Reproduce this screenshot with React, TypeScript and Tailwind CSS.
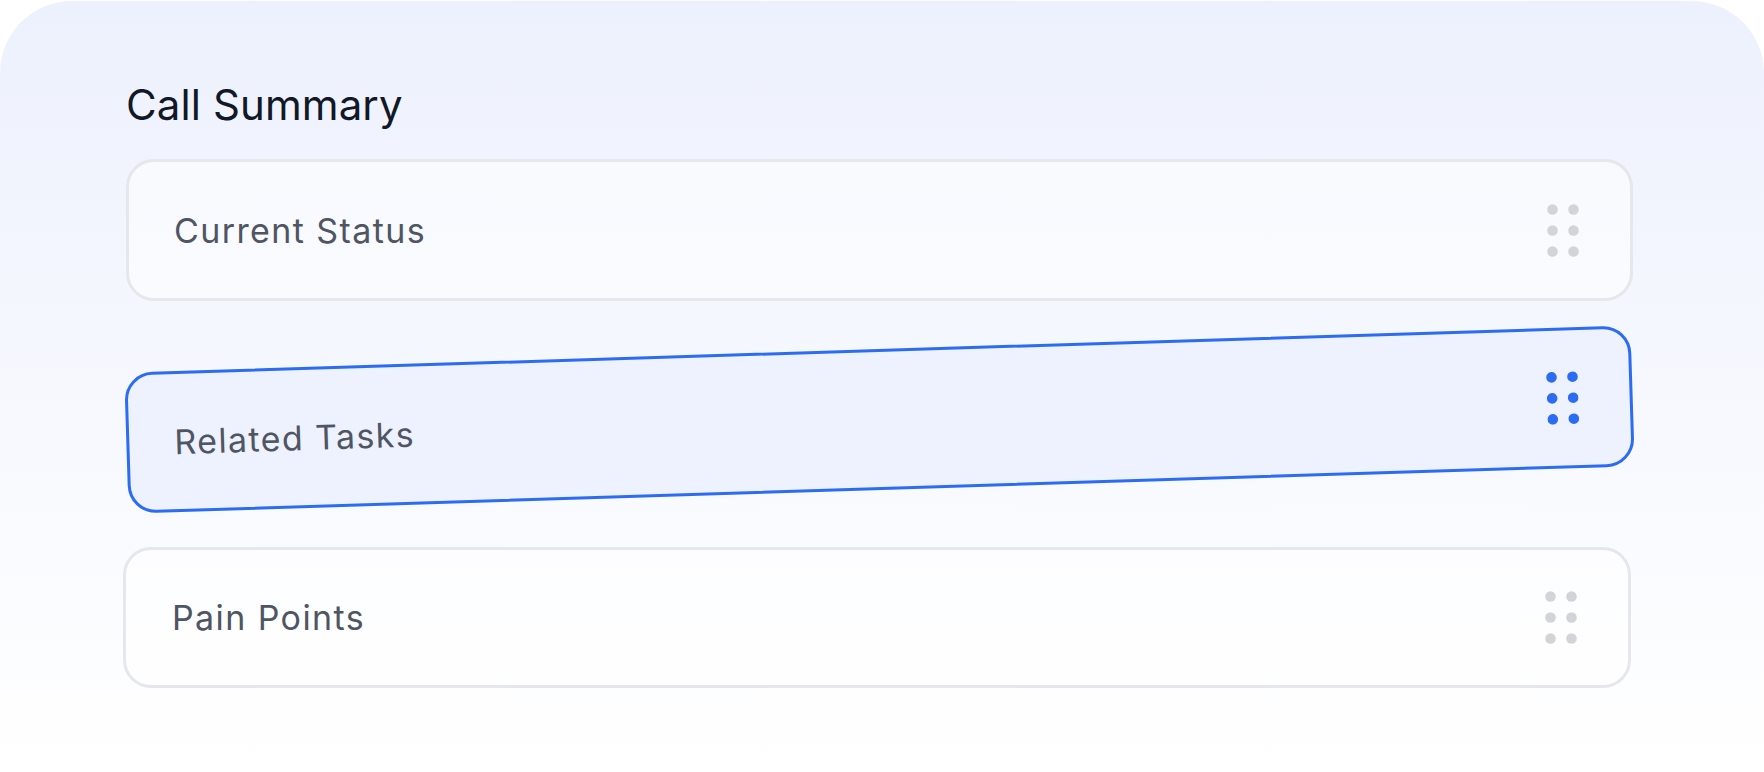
import React from 'react'

const items = ['Current Status', 'Related Tasks', 'Pain Points']

function Grip({ active }: { active?: boolean }) {
  const fill = active ? '#2b6cf3' : '#d4d4d8'
  const dots = [
    [5.5, 5.5],
    [26.5, 5.5],
    [5.5, 26.5],
    [26.5, 26.5],
    [5.5, 47.5],
    [26.5, 47.5],
  ]
  return (
    <svg width="32" height="53" viewBox="0 0 32 53" className="shrink-0">
      {dots.map(([cx, cy], i) => (
        <circle key={i} cx={cx} cy={cy} r="5.3" fill={fill} />
      ))}
    </svg>
  )
}

export default function App() {
  return (
    <div className="min-h-screen bg-white font-['Inter','Noto_Sans',sans-serif]">
      <div className="mt-px h-[771px] rounded-t-[72px] bg-gradient-to-b from-[#edf1fd] to-white pl-[126px] pr-[131px] pt-[83px]">
        <h2 className="text-[42px] leading-none font-normal text-[#111827] tracking-[0.1px]">
          Call Summary
        </h2>

        <div className="mt-[33px] flex h-[142px] items-center justify-between rounded-[28px] border-[3px] border-[#e6e7eb] bg-white/50 pl-[45px] pr-[51px]">
          <span className="text-[34px] tracking-[1.4px] text-[#4f5562]">{items[0]}</span>
          <Grip />
        </div>

        <div className="mt-[48px] flex h-[141px] -rotate-[1.8deg] items-center justify-between rounded-[28px] border-[3px] border-[#2b6cf3] bg-[#edf2fe] pl-[45px] pr-[51px]">
          <span className="text-[34px] tracking-[1.4px] text-[#4f5562]">{items[1]}</span>
          <Grip active />
        </div>

        <div className="mt-[57px] -ml-[3px] mr-[2px] flex h-[141px] items-center justify-between rounded-[28px] border-[3px] border-[#e6e7eb] bg-white/60 pl-[46px] pr-[51px]">
          <span className="text-[34px] tracking-[1.4px] text-[#4f5562]">{items[2]}</span>
          <Grip />
        </div>
      </div>
    </div>
  )
}
